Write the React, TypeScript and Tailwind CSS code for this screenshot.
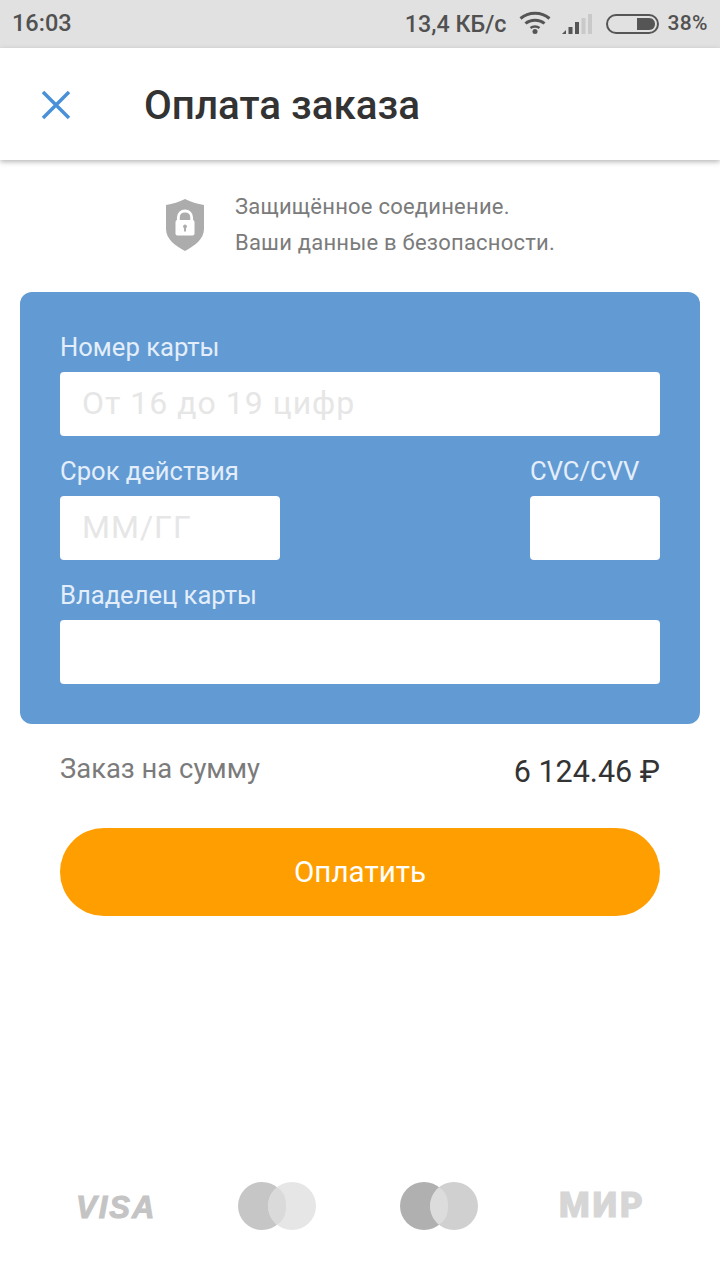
import React from "react";

function Wifi() {
  return (
    <svg width="32" height="24" viewBox="0 0 32 24" fill="none" stroke="#555" strokeWidth="3">
      <path d="M1.5 8.5C9.5 1.5 22.500 1.500 30.500 8.500" />
      <path d="M6.500 13.500C11.500 9 20.500 9 25.500 13.500" />
      <path d="M11.500 18C14 16 18 16 20.500 18" strokeWidth="2.500" />
      <circle cx="16" cy="21.500" r="2.500" fill="#555" stroke="none" />
    </svg>
  );
}

function Signal() {
  return (
    <svg width="30" height="20" viewBox="0 0 30 20">
      <path d="M0 20L4 16V20Z" fill="#555" />
      <rect x="6.500" y="13" width="4" height="7" fill="#555" />
      <rect x="13" y="8" width="4" height="12" fill="#555" />
      <rect x="19.500" y="4" width="4" height="16" fill="#c9c9c9" />
      <rect x="26" y="0" width="4" height="20" fill="#c9c9c9" />
    </svg>
  );
}

function Battery() {
  return (
    <svg width="53" height="20" viewBox="0 0 53 20" fill="none">
      <rect x="1" y="1" width="51" height="18" rx="9" stroke="#555" strokeWidth="2" />
      <path d="M31 4H43C47 4 49 7 49 10C49 13 47 16 43 16H31Z" fill="#555" />
    </svg>
  );
}

function Shield() {
  return (
    <svg width="38" height="52" viewBox="0 0 40 52" preserveAspectRatio="none">
      <path d="M20 0C26 3 33 5 40 6V30C40 40 30 47 20 52C10 47 0 40 0 30V6C7 5 14 3 20 0Z" fill="#acacac" />
      <path d="M13 22V18.500C13 14.500 16 12 20 12C24 12 27 14.500 27 18.500V22" fill="none" stroke="#fff" strokeWidth="3" />
      <rect x="10" y="21" width="20" height="15.500" rx="2" fill="#fff" />
      <circle cx="20" cy="27.500" r="2" fill="#acacac" />
      <rect x="19" y="28" width="2" height="4.500" fill="#acacac" />
    </svg>
  );
}

function Circles({ left, right, mid }: { left: string; right: string; mid: string }) {
  return (
    <svg width="78" height="48" viewBox="0 0 78 48">
      <ellipse cx="24" cy="24" rx="24" ry="24" fill={left} />
      <ellipse cx="54" cy="24" rx="24" ry="24" fill={right} />
      <path d="M39 5.500C47 10 48 18 48 24C48 30 47 38 39 42.500C33 38 30 30 30 24C30 18 33 10 39 5.500Z" fill={mid} />
    </svg>
  );
}

function Field({ label, placeholder, className }: { label: string; placeholder?: string; className: string }) {
  return (
    <div className={className}>
      <div className="h-10 text-[25.600px] leading-[30px] text-[#e3eefa]">{label}</div>
      <input
        readOnly
        placeholder={placeholder}
        className="block h-16 w-full rounded-[4px] bg-white px-[22px] pb-[2px] text-[32px] tracking-[1px] outline-none placeholder:text-[#e6e6e6]"
      />
    </div>
  );
}

export default function App() {
  return (
    <div className="flex h-[1280px] w-[720px] flex-col overflow-hidden bg-white font-['Roboto',sans-serif]">
      <div className="flex h-12 items-center justify-between bg-[#e1e1e1] pl-3 pr-3 text-[#515151]">
        <span className="text-[23.500px] font-medium">16:03</span>
        <div className="flex items-center">
          <span className="text-[23.300px] font-medium">13,4 КБ/с</span>
          <span className="ml-[13px] -mt-1"><Wifi /></span>
          <span className="ml-[11px]"><Signal /></span>
          <span className="ml-[14px]"><Battery /></span>
          <span className="ml-2 text-[21px] font-medium tracking-[0.4px]">38%</span>
        </div>
      </div>

      <div className="relative flex h-28 items-center bg-white shadow-[0_2px_5px_rgba(0,0,0,0.28)]">
        <svg className="ml-[41px] mt-[2px]" width="30" height="30" viewBox="0 0 30 30" fill="none" stroke="#4a90d9" strokeWidth="3.500">
          <path d="M2 2L28 28M28 2L2 28" />
        </svg>
        <h1 className="ml-[73px] mt-[5px] text-[40.400px] font-medium leading-none text-[#333]">Оплата заказа</h1>
      </div>

      <div className="mt-[30px] flex h-[70px] items-center pl-[166px]">
        <Shield />
        <div className="ml-[31px] text-[22px] leading-[36px] tracking-[0.22px] text-[#7b7b7b]">
          <div>Защищённое соединение.</div>
          <div>Ваши данные в безопасности.</div>
        </div>
      </div>

      <div className="mx-5 mt-8 flex h-[432px] flex-col gap-5 rounded-xl bg-[#629ad3] px-10 pt-10">
        <Field label="Номер карты" placeholder="От 16 до 19 цифр" className="w-full" />
        <div className="flex justify-between">
          <Field label="Срок действия" placeholder="ММ/ГГ" className="w-[220px]" />
          <Field label="CVC/CVV" className="w-[130px]" />
        </div>
        <Field label="Владелец карты" className="w-full" />
      </div>

      <div className="mx-[60px] mt-[28px] flex h-9 items-center justify-between">
        <span className="text-[27.400px] text-[#7b7b7b]">Заказ на сумму</span>
        <span className="mt-1 text-[30.500px] text-[#333]">6 124.46 ₽</span>
      </div>

      <button className="mx-[60px] mt-10 h-[88px] rounded-full bg-[#ff9e00] text-[29.600px] text-white">Оплатить</button>

      <div className="mt-[266px] flex h-12 items-center">
        <span className="ml-[76px] mt-1 w-[80px] font-['Liberation_Sans',sans-serif] text-[31px] font-bold italic tracking-[2px] text-[#c4c4c4] [-webkit-text-stroke:1px_#c4c4c4]">VISA</span>
        <span className="ml-[82px]"><Circles left="#c6c6c6" right="#e6e6e6" mid="#dadada" /></span>
        <span className="ml-[84px]"><Circles left="#b0b0b0" right="#d0d0d0" mid="#dcdcdc" /></span>
        <span className="ml-[81px] mt-[1px] font-['Roboto',sans-serif] text-[35px] font-black tracking-[3px] text-[#d6d6d6] [-webkit-text-stroke:1px_#d6d6d6]">МИР</span>
      </div>
    </div>
  );
}
